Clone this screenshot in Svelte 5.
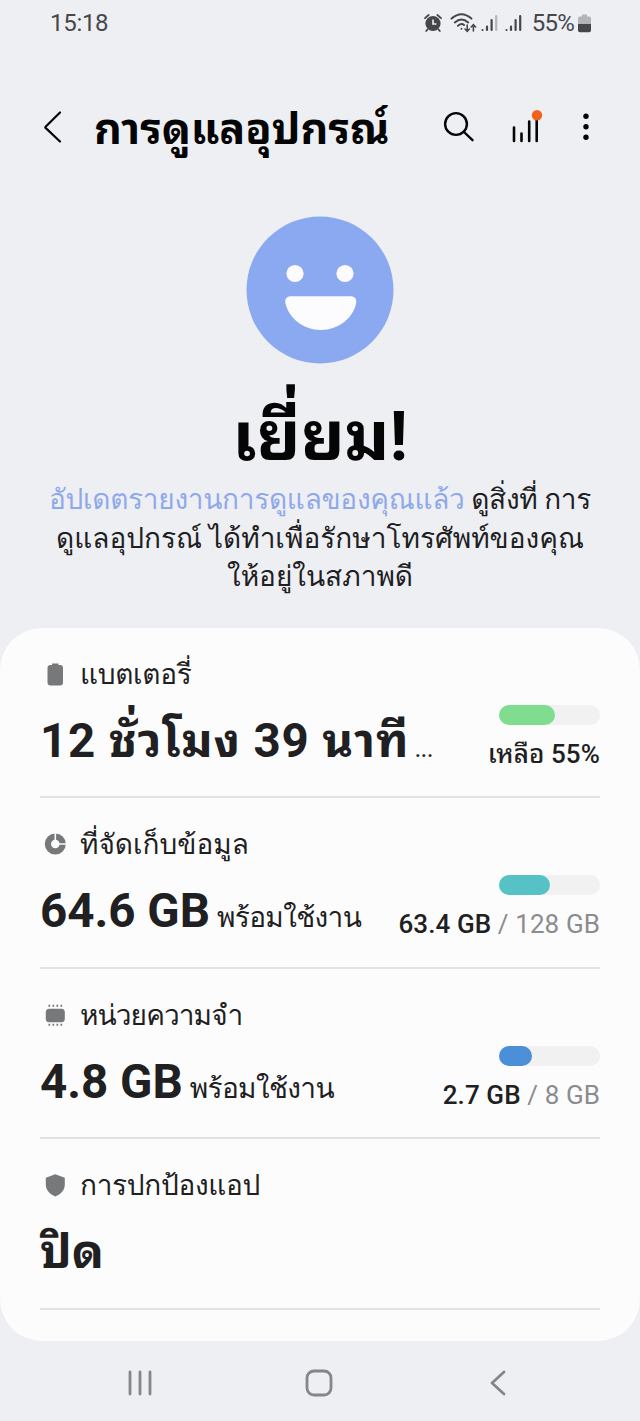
<script>
  const items = [
    { id: 'battery', title: 'แบตเตอรี่', value: '12 ชั่วโมง 39 นาที', note: '...', used: 'เหลือ 55%', percent: 55, color: '#80dc8e' },
    { id: 'storage', title: 'ที่จัดเก็บข้อมูล', value: '64.6 GB', note: 'พร้อมใช้งาน', used: '63.4 GB', total: '128 GB', percent: 50, color: '#56c2c6' },
    { id: 'memory', title: 'หน่วยความจำ', value: '4.8 GB', note: 'พร้อมใช้งาน', used: '2.7 GB', total: '8 GB', percent: 33, color: '#4b8fd8' },
    { id: 'protection', title: 'การปกป้องแอป', value: 'ปิด' }
  ];
</script>

<div class="screen">
  <div class="status-bar">
    <span class="clock">15:18</span>
    <div class="status-icons">
      <svg class="alarm" width="18" height="20" viewBox="0 0 18 20">
        <circle cx="9" cy="10.5" r="7.6" fill="#46474b" />
        <path d="M1 5.2 4.6 2M17 5.2 13.4 2M3.6 16.4 2.2 18M14.4 16.4l1.4 1.6" stroke="#46474b" stroke-width="1.8" stroke-linecap="round" />
        <path d="M9 6.4v4.6h3.4" fill="none" stroke="#eeeff3" stroke-width="1.6" />
      </svg>
      <svg class="wifi" width="28" height="20" viewBox="0 0 28 20" fill="none" stroke="#46474b" stroke-width="2" stroke-linecap="round">
        <path d="M1.6 5.6Q11.5-3 21.4 5.6M4.8 9.4Q11.5 3.6 18.2 9.4M8 12.8Q11.5 9.8 14 12" />
        <circle cx="11.5" cy="15.8" r="1" fill="#46474b" stroke="none" />
        <path d="M17.2 12v6M15 16l2.2 2.3 2.2-2.3M23.4 18v-6M21.2 14l2.2-2.3 2.2 2.3" stroke-width="1.6" />
      </svg>
      <svg class="signal" width="17" height="18" viewBox="0 0 17 18" stroke="#46474b" stroke-width="2.2" stroke-linecap="round">
        <path d="M1.5 16v0M6 16v-3.4M10.6 16V6" />
        <path d="M15.2 16V2" stroke="#b3b4b7" />
      </svg>
      <svg class="signal second" width="17" height="18" viewBox="0 0 17 18" stroke="#46474b" stroke-width="2.2" stroke-linecap="round">
        <path d="M1.5 16v0M6 16v-3.4M10.6 16V6M15.2 16V2" />
      </svg>
      <span class="level">55%</span>
      <svg class="cell" width="13" height="20" viewBox="0 0 13 20">
        <path d="M4 1.4h5v2h2q2 0 2 2V11H0V5.4q0-2 2-2h2z" fill="#b3b4b7" />
        <path d="M0 11h13v6.2q0 2-2 2H2q-2 0-2-2z" fill="#46474b" />
      </svg>
    </div>
  </div>

  <header>
    <svg class="back" width="20" height="34" viewBox="0 0 20 34" fill="none" stroke="#050505" stroke-width="2.2" stroke-linecap="round" stroke-linejoin="round">
      <path d="M17 2.5 2.6 16.7Q2 17.3 2.6 17.9L17 31.5" />
    </svg>
    <h1>การดูแลอุปกรณ์</h1>
    <svg class="search" width="32" height="32" viewBox="0 0 32 32" fill="none" stroke="#050505" stroke-width="2.4" stroke-linecap="round">
      <circle cx="13" cy="13" r="10.9" />
      <path d="M21 21 29.5 29.2" />
    </svg>
    <svg class="chart" width="34" height="36" viewBox="0 0 34 36" stroke="#050505" stroke-width="2.6" stroke-linecap="round">
      <path d="M4 18.5V32M11.5 24.5V32M19.2 12.5V32M26.7 7V32" />
      <circle cx="27" cy="6.200" r="5.200" fill="#f2601c" stroke="none" />
    </svg>
    <svg class="more" width="8" height="30" viewBox="0 0 8 30" fill="#050505">
      <circle cx="4" cy="4.2" r="2.7" />
      <circle cx="4" cy="14.7" r="2.7" />
      <circle cx="4" cy="25.2" r="2.7" />
    </svg>
  </header>

  <section class="summary">
    <svg class="face" width="148" height="148" viewBox="0 0 148 148">
      <circle cx="74" cy="74" r="73.5" fill="#8ba9f1" />
      <circle cx="49" cy="57.5" r="8.6" fill="#fcfcff" />
      <circle cx="99" cy="57.5" r="8.6" fill="#fcfcff" />
      <path d="M44.5 80.3H105Q110.5 80.3 110.3 86.3C107.5 102 92.5 114 74.7 114S42.5 102 39.2 86.3Q39 80.3 44.5 80.3Z" fill="#fcfcff" />
    </svg>
    <h2>เยี่ยม!</h2>
    <div class="description">
      <div class="lead"><a href="#report">อัปเดตรายงานการดูแลของคุณแล้ว</a> ดูสิ่งที่ การ</div>
      <div>ดูแลอุปกรณ์ ได้ทำเพื่อรักษาโทรศัพท์ของคุณ</div>
      <div>ให้อยู่ในสภาพดี</div>
    </div>
  </section>

  <main>
    {#each items as item}
      <div class="item {item.id}">
        <div class="item-title">
          <svg width="22" height="24" viewBox="0 0 22 24" fill="#77787a">
            {#if item.id === 'battery'}
              <path d="M8 .5h6.500V2h1.500q3 0 3 3v14.500q0 3-3 3H6.500q-3 0-3-3V5q0-3 3-3H8z" />
            {:else if item.id === 'storage'}
              <circle cx="11.300" cy="11" r="7.400" fill="none" stroke="#77787a" stroke-width="6.200" />
              <path d="M11.300 11V0M11.300 11H22" stroke="#fcfcfc" stroke-width="1.600" />
            {:else if item.id === 'memory'}
              <rect x="1.800" y="4.800" width="19" height="13.500" rx="3.500" />
              <path d="M5.300.800v2M9.300.800v2M13.300.800v2M17.300.800v2M5.300 19.800v2M9.300 19.800v2M13.300 19.800v2M17.300 19.800v2" stroke="#77787a" stroke-width="1.700" />
            {:else}
              <path d="M11.300.200 20.800 3.700v6.500C20.800 16.200 16.800 20.200 11.300 22.400 5.800 20.200 1.800 16.200 1.800 10.200V3.700Z" />
            {/if}
          </svg>
          <span>{item.title}</span>
        </div>
        <div class="item-body">
          <div class="value">
            <strong>{item.value}</strong>
            {#if item.note}<span class="note">{item.note}</span>{/if}
          </div>
          {#if item.used}
            <div class="usage">
              <div class="bar"><div class="fill" style="width: {item.percent}%; background: {item.color}"></div></div>
              <div class="amount"><b>{item.used}</b>{#if item.total}<span>{' / ' + item.total}</span>{/if}</div>
            </div>
          {/if}
        </div>
      </div>
    {/each}
  </main>

  <nav>
    <svg width="26" height="28" viewBox="0 0 26 28" stroke="#85868a" stroke-width="2.8" stroke-linecap="round">
      <path d="M3 3v22M13 3v22M23 3v22" />
    </svg>
    <svg class="home" width="28" height="28" viewBox="0 0 28 28" fill="none" stroke="#85868a" stroke-width="2.8">
      <rect x="2" y="2" width="24" height="24" rx="7" />
    </svg>
    <svg width="18" height="28" viewBox="0 0 18 28" fill="none" stroke="#85868a" stroke-width="2.8" stroke-linecap="round" stroke-linejoin="round">
      <path d="M15 3 3 14 15 25" />
    </svg>
  </nav>
</div>

<style>
  :global(body) {
    background: #eeeff3;
  }
  .screen {
    width: 640px;
    height: 1421px;
    overflow: hidden;
    display: flex;
    flex-direction: column;
    background: #eeeff3;
    color: #202022;
    font-family: Roboto, Loma, sans-serif;
  }
  .screen > * {
    flex-shrink: 0;
    box-sizing: border-box;
  }
  h1, h2, strong, b {
    font-family: Roboto, "Noto Sans Thai Looped", Loma, sans-serif;
  }
  svg {
    display: block;
    flex-shrink: 0;
  }
  .status-bar {
    height: 48px;
    padding: 0 49px 2px 50px;
    display: flex;
    justify-content: space-between;
    align-items: center;
    color: #46474b;
    font-size: 24px;
  }
  .clock {
    letter-spacing: -0.3px;
  }
  .status-icons {
    display: flex;
    align-items: center;
  }
  .wifi {
    margin-left: 8px;
  }
  .signal {
    margin-left: 3px;
  }
  .second {
    margin-left: 7px;
  }
  .level {
    margin-left: 10px;
    letter-spacing: -0.8px;
  }
  .cell {
    margin-left: 4px;
  }
  header {
    height: 158px;
    padding: 0 50px 0 43px;
    display: flex;
    align-items: center;
  }
  h1 {
    flex: 1;
    margin: 3px 0 0 31px;
    color: #050505;
    font-size: 43px;
    line-height: 60px;
    white-space: nowrap;
  }
  .search {
    margin-bottom: 1px;
  }
  .chart {
    margin: 0 2px 0 35px;
  }
  .more {
    margin-left: 36px;
  }
  .summary {
    height: 422px;
    padding-top: 10px;
    display: flex;
    flex-direction: column;
    align-items: center;
  }
  h2 {
    margin: 27px 0 -2px;
    color: #050505;
    font-size: 68px;
    line-height: 92px;
    white-space: nowrap;
  }
  .description {
    text-align: center;
    font-size: 28px;
    line-height: 38.5px;
    white-space: nowrap;
  }
  .lead {
    letter-spacing: -0.28px;
  }
  a {
    color: #8ea9ea;
    text-decoration: none;
  }
  main {
    height: 713px;
    padding: 0 40px;
    background: #fcfcfc;
    border-radius: 42px;
  }
  .item {
    height: 170.5px;
    padding-top: 27px;
    box-sizing: border-box;
    border-bottom: 2px solid #e2e2e3;
  }
  .item.battery {
    height: 170px;
  }
  .item-title {
    height: 40px;
    padding-left: 4px;
    display: flex;
    align-items: center;
    gap: 14px;
    font-size: 28px;
    line-height: 40px;
  }
  .battery .item-title,
  .protection .item-title {
    letter-spacing: -0.3px;
  }
  .memory .item-title {
    letter-spacing: -0.9px;
  }
  .item-body {
    display: flex;
    justify-content: space-between;
  }
  .value {
    height: 80px;
    line-height: 92px;
    white-space: nowrap;
  }
  strong {
    font-size: 47.5px;
  }
  .battery strong {
    letter-spacing: 0.85px;
  }
  .note {
    margin-left: 3px;
    font-size: 28px;
    letter-spacing: -0.65px;
  }
  .battery .note {
    margin-left: 1px;
    font-size: 26px;
  }
  .usage {
    padding-top: 10px;
    display: flex;
    flex-direction: column;
    align-items: flex-end;
  }
  .bar {
    width: 101px;
    height: 20px;
    border-radius: 10px;
    background: #f1f1f1;
  }
  .fill {
    height: 20px;
    border-radius: 10px;
  }
  .amount {
    margin-top: 9px;
    color: #8b8c90;
    font-size: 26px;
    line-height: 40px;
    letter-spacing: 0.1px;
    white-space: pre;
  }
  b {
    color: #202022;
    font-weight: 500;
  }
  nav {
    height: 80px;
    padding: 4px 133px 0 127px;
    display: flex;
    justify-content: space-between;
    align-items: center;
  }
  .home {
    margin-right: 4px;
  }
</style>
